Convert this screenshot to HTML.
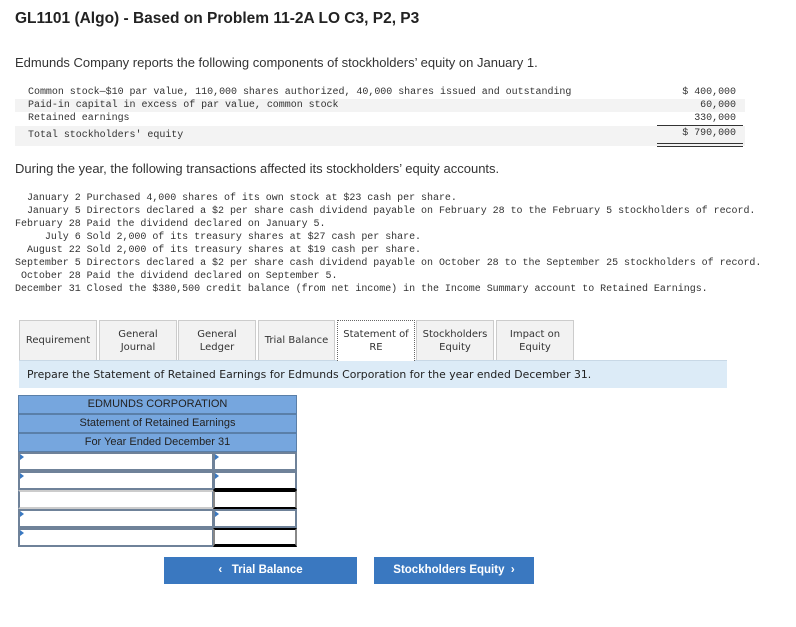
<!DOCTYPE html>
<html><head><style>
body{margin:0;width:796px;height:627px;background:#fff;font-family:"Liberation Sans",sans-serif;color:#222;position:relative;overflow:hidden}
.a{position:absolute;white-space:pre}
.m{font-family:"Liberation Mono",monospace;font-size:10px;color:#333;letter-spacing:-0.03px}
.tab{position:absolute;top:320px;height:40px;background:#f2f2f2;border:1px solid #ccc;border-bottom:none;box-sizing:border-box;font-family:"DejaVu Sans",sans-serif;font-size:10px;text-align:center;display:flex;align-items:center;justify-content:center;line-height:13px;color:#333}
.hd{position:absolute;left:18px;width:279px;height:19px;background:#76a6de;border:1px solid #5a7fa8;box-sizing:border-box;font-size:11px;text-align:center;line-height:17px;color:#222}
.r{position:absolute;height:19px;box-sizing:border-box;border:2px solid #6f8299;background:#fff}
.t{position:absolute;width:0;height:0;border-top:3px solid transparent;border-bottom:3px solid transparent;border-left:4px solid #3a78c0}
.btn{position:absolute;top:557px;height:27px;background:#3a78c0;color:#fff;font-weight:bold;font-size:11.5px;text-align:center;line-height:27px}
</style></head><body>
<div class="a" style="left:15px;top:10px;font-size:15.5px;font-weight:bold;color:#222">GL1101 (Algo) - Based on Problem 11-2A LO C3, P2, P3</div>
<div class="a" style="left:15px;top:55px;font-size:13px;color:#333">Edmunds Company reports the following components of stockholders’ equity on January 1.</div>
<div style="position:absolute;left:15px;top:99px;width:730px;height:13px;background:#f3f3f3"></div>
<div style="position:absolute;left:15px;top:126px;width:730px;height:20px;background:#f3f3f3"></div>
<div class="a m" style="left:28px;top:86px;line-height:13px">Common stock—$10 par value, 110,000 shares authorized, 40,000 shares issued and outstanding
Paid-in capital in excess of par value, common stock
Retained earnings</div>
<div class="a m" style="left:28px;top:130px">Total stockholders' equity</div>
<div class="a m" style="left:650px;top:86px;width:86px;text-align:right;line-height:13px">$ 400,000
60,000
330,000</div>
<div style="position:absolute;left:657px;top:125px;width:86px;border-top:1px solid #333"></div>
<div class="a m" style="left:650px;top:128px;width:86px;text-align:right">$ 790,000</div>
<div style="position:absolute;left:657px;top:143px;width:86px;height:2px;border-top:1px solid #333;border-bottom:1px solid #333"></div>
<div class="a" style="left:15px;top:161px;font-size:13px;color:#333">During the year, the following transactions affected its stockholders’ equity accounts.</div>
<div class="a m" style="left:15px;top:192px;line-height:13px">  January 2 Purchased 4,000 shares of its own stock at $23 cash per share.
  January 5 Directors declared a $2 per share cash dividend payable on February 28 to the February 5 stockholders of record.
February 28 Paid the dividend declared on January 5.
     July 6 Sold 2,000 of its treasury shares at $27 cash per share.
  August 22 Sold 2,000 of its treasury shares at $19 cash per share.
September 5 Directors declared a $2 per share cash dividend payable on October 28 to the September 25 stockholders of record.
 October 28 Paid the dividend declared on September 5.
December 31 Closed the $380,500 credit balance (from net income) in the Income Summary account to Retained Earnings.</div>
<div class="tab" style="left:19px;width:78px">Requirement</div>
<div class="tab" style="left:99px;width:78px">General<br>Journal</div>
<div class="tab" style="left:178px;width:78px">General<br>Ledger</div>
<div class="tab" style="left:258px;width:77px">Trial Balance</div>
<div class="tab" style="left:337px;width:78px;background:#fff;border:1px dotted #666;border-bottom:none;height:41px;z-index:2">Statement of<br>RE</div>
<div class="tab" style="left:416px;width:78px">Stockholders<br>Equity</div>
<div class="tab" style="left:496px;width:78px">Impact on<br>Equity</div>
<div style="position:absolute;left:19px;top:360px;width:708px;height:28px;background:#dcebf7;border-top:1px solid #c8d8e6;box-sizing:border-box"></div>
<div class="a" style="left:27px;top:368px;font-family:'DejaVu Sans',sans-serif;font-size:10.85px;color:#222">Prepare the Statement of Retained Earnings for Edmunds Corporation for the year ended December 31.</div>
<div class="hd" style="top:395px">EDMUNDS CORPORATION</div>
<div class="hd" style="top:414px">Statement of Retained Earnings</div>
<div class="hd" style="top:433px">For Year Ended December 31</div>
<div class="r" style="left:18px;top:452px;width:196px"></div><div class="r" style="left:213px;top:452px;width:84px"></div>
<div class="r" style="left:18px;top:471px;width:196px"></div><div class="r" style="left:213px;top:471px;width:84px;border-bottom-color:#000"></div>
<div class="r" style="left:18px;top:490px;width:196px;border-color:#ccc #6f8299"></div><div class="r" style="left:213px;top:490px;width:84px;border-color:#000 #888"></div>
<div class="r" style="left:18px;top:509px;width:196px"></div><div class="r" style="left:213px;top:509px;width:84px"></div>
<div class="r" style="left:18px;top:528px;width:196px"></div><div class="r" style="left:213px;top:528px;width:84px;border-color:#000 #888;border-bottom:3px solid #000"></div>
<div class="t" style="left:20px;top:454px"></div><div class="t" style="left:215px;top:454px"></div>
<div class="t" style="left:20px;top:473px"></div><div class="t" style="left:215px;top:473px"></div>
<div class="t" style="left:20px;top:511px"></div><div class="t" style="left:215px;top:511px"></div>
<div class="t" style="left:20px;top:530px"></div>
<div class="btn" style="left:164px;width:193px">‹&nbsp;&nbsp; Trial Balance</div>
<div class="btn" style="left:374px;width:160px">Stockholders Equity &nbsp;›</div>
</body></html>
